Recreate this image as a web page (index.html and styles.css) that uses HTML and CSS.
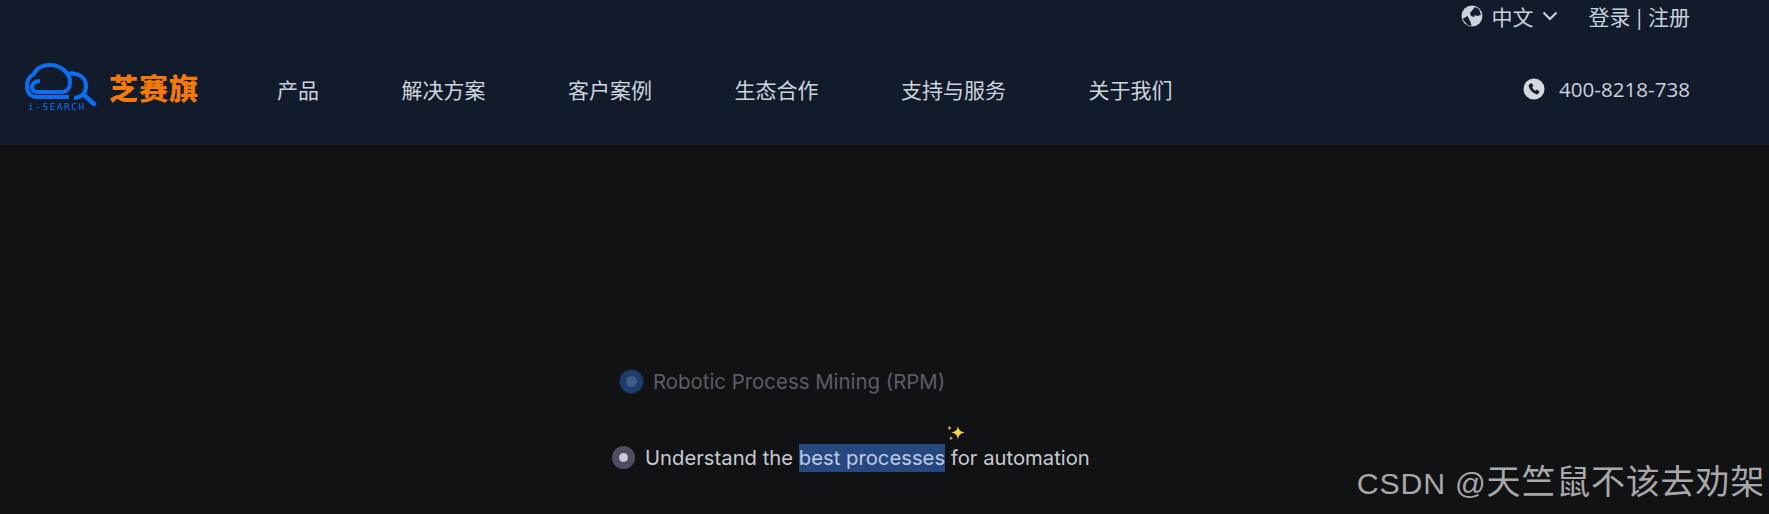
FILE: index.html
```html
<!DOCTYPE html>
<html>

<head>
    <title>i-Search</title>
    <meta charset="UTF-8">
    <link rel="stylesheet" href="styles.css">
</head>

<body>
    <header class="header">
        <div class="top-bar">
            <svg class="globe" viewBox="0 0 22 22">
                <circle cx="11" cy="11" r="10.500" fill="#c9d1dc" />
                <path d="M9 8l5-6 4 2 2 6-4 1-2-1-1 2-3-1z M1.500 14l5-3 3 6 1 4-4-1z" fill="#131c2e" />
            </svg>
            <span class="lang">中文</span>
            <svg class="chevron" viewBox="0 0 16 10">
                <path d="M1.500 1.500L8 8l6.500-6.500" fill="none" stroke="#c9d1dc" stroke-width="2" />
            </svg>
            <span class="login">登录 | 注册</span>
        </div>
        <div class="main-bar">
            <div class="logo">
                <svg class="logo-mark" viewBox="0 0 72 46">
                    <path d="M44 34H12C5 34 2 29 2 23 2 17 5 13 9 11 11 5 18 2 25 2 36 2 45 10 45 19 45 25 42 29 37 29H13C9 29 7 27 7 24 7 21 10 18 15 18" fill="none" stroke="#0b6ff5" stroke-width="4" />
                    <path d="M43 11C46 10 48 10 50 11 57 12 61 17 61 23 61 30 56 35 49 35" fill="none" stroke="#0b6ff5" stroke-width="4" />
                    <path d="M59 32L69 41" stroke="#0b6ff5" stroke-width="4.500" stroke-linecap="round" />
                </svg>
                <span class="logo-small">i-SEARCH</span>
                <span class="logo-name">芝赛旗</span>
            </div>
            <nav class="nav">
                <a class="nav-item">产品</a>
                <a class="nav-item">解决方案</a>
                <a class="nav-item">客户案例</a>
                <a class="nav-item">生态合作</a>
                <a class="nav-item">支持与服务</a>
                <a class="nav-item">关于我们</a>
            </nav>
            <div class="phone">
                <svg class="phone-icon" viewBox="0 0 22 22">
                    <circle cx="11" cy="11" r="10.500" fill="#d3d8e0" />
                    <path d="M6.500 6.200l2.300-1.300 1.600 3.200-1.300 1.100c.6 1.500 1.700 2.800 3.300 3.600l1.200-1.200 3 1.900-1.400 2.400c-.5.600-1.400.6-2.400.2-3.500-1.400-6-4-7-7.600-.2-1 .1-1.900.7-2.500z" fill="#131c2e" />
                </svg>
                <span>400-8218-738</span>
            </div>
        </div>
    </header>

    <main class="stage">
        <div class="step step-first">
            <span class="dot dot-blue"></span>
            <span>Robotic Process Mining (RPM)</span>
        </div>
        <div class="step step-second">
            <span class="dot dot-grey"></span>
            <span>Understand the <mark class="hl">best processes<svg class="sparkle" viewBox="0 0 20 18">
                <path d="M12 2c.7 4 2 5.400 6.500 6.500C14 9.600 12.700 11 12 15.500 11.300 11 10 9.600 5.500 8.500 10 7.400 11.300 6 12 2z" fill="#ffd53f" />
                <path d="M3.500 1.500c.3 1.700.8 2.200 2.500 2.500-1.700.3-2.200.8-2.500 2.500C3.200 4.800 2.700 4.300 1 4c1.700-.3 2.200-.8 2.500-2.500z" fill="#f5b82e" />
                <path d="M5 12c.3 1.500.7 1.900 2.200 2.200-1.500.3-1.900.7-2.200 2.200-.3-1.500-.7-1.900-2.200-2.200C4.300 13.900 4.700 13.500 5 12z" fill="#f5b82e" />
            </svg></mark> for automation</span>
        </div>
    </main>

    <div class="watermark"><span class="watermark-latin">CSDN @</span>天竺鼠不该去劝架</div>
</body>

</html>
```

FILE: styles.css
```css
html,
body {
    margin: 0;
    height: 514px;
    overflow: hidden;
}

body {
    position: relative;
    background-color: #111214;
    font-family: "Open Sans", "Noto Sans CJK SC", sans-serif;
}

.header {
    height: 145px;
    box-sizing: border-box;
    background-color: #121b2b;
    color: #c9d1dc;
    font-size: 20.600px;
    padding: 0 79px 0 25px;
}

.top-bar {
    height: 31px;
    display: flex;
    align-items: center;
    justify-content: flex-end;
    font-size: 21px;
}

.globe {
    width: 22px;
    height: 22px;
    margin-right: 9px;
}

.chevron {
    width: 16px;
    height: 10px;
    margin: 0 31px 0 8px;
}

.login {
    word-spacing: -2.500px;
}

.main-bar {
    height: 114px;
    display: flex;
    align-items: center;
    padding-top: 2px;
    box-sizing: border-box;
}

.logo {
    position: relative;
    width: 252px;
    height: 60px;
    display: flex;
    align-items: center;
}

.logo-mark {
    width: 72px;
    height: 46px;
    align-self: flex-start;
    margin-top: 4px;
}

.logo-small {
    position: absolute;
    left: 3px;
    top: 42px;
    font-family: "DejaVu Sans Mono", monospace;
    font-size: 9.500px;
    letter-spacing: 1.500px;
    color: #0b6ff5;
}

.logo-name {
    margin-left: 12px;
    margin-top: -2px;
    font-size: 29px;
    font-weight: 900;
    line-height: 1;
    letter-spacing: 1px;
    color: #f57a05;
}

.nav {
    display: flex;
    gap: 82.500px;
    flex: 1;
}

.nav-item {
    font-size: 21px;
    color: #cdd4de;
}

.phone {
    display: flex;
    align-items: center;
    gap: 14px;
}

.phone-icon {
    width: 22px;
    height: 22px;
}

.stage {
    color: #c8c9d0;
    font-family: Inter, sans-serif;
    font-size: 20.250px;
}

.step {
    display: flex;
    align-items: center;
    height: 30px;
}

.step-first {
    padding: 221px 0 0 620px;
    color: #5b5d68;
    font-size: 20.400px;
}

.step-second {
    margin-top: 46px;
    padding-left: 612px;
}

.dot {
    box-sizing: border-box;
    width: 23px;
    height: 23px;
    border-radius: 50%;
    margin-right: 10px;
}

.dot-blue {
    background-color: #3f5c86;
    border: 6px solid #1c3d6e;
    outline: 1px dotted #1c3d6e;
}

.dot-grey {
    background-color: #c9cbdb;
    border: 7px solid #4d4f61;
}

.hl {
    position: relative;
    background-color: #27477f;
    color: #bccbe6;
    padding: 1px 0 2px;
}

.sparkle {
    position: absolute;
    right: -21px;
    top: -20px;
    width: 20px;
    height: 18px;
}

.watermark {
    position: absolute;
    right: 4px;
    top: 455px;
    font-family: "Liberation Sans", "Noto Sans CJK SC", sans-serif;
    font-size: 34px;
    letter-spacing: 0.800px;
    color: #a8a8a8;
    white-space: nowrap;
}

.watermark-latin {
    font-size: 30.300px;
}
```
